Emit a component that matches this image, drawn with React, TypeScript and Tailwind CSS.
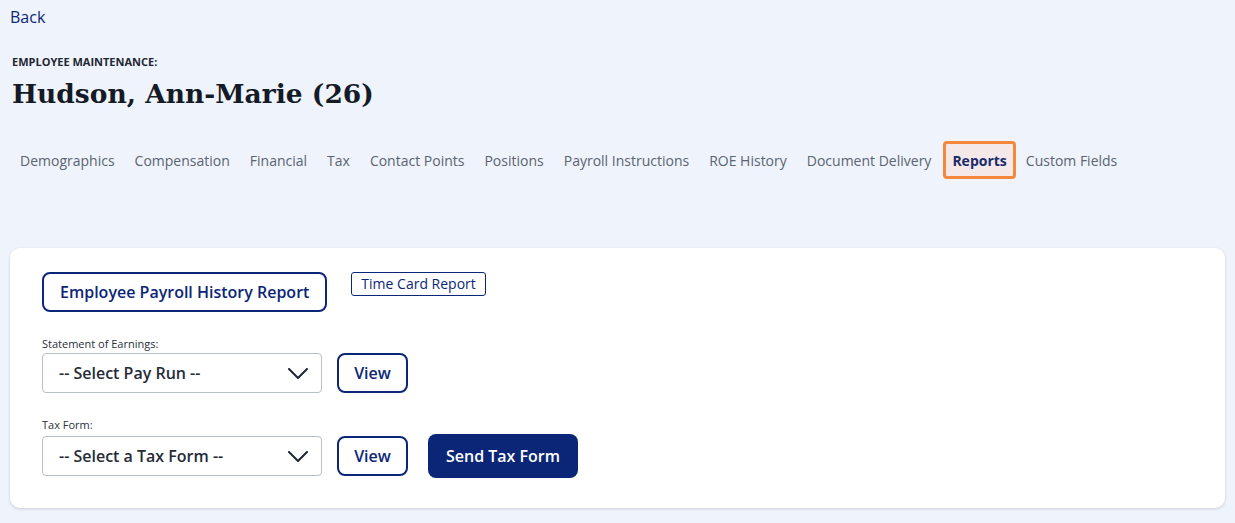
const tabs = [
  "Demographics",
  "Compensation",
  "Financial",
  "Tax",
  "Contact Points",
  "Positions",
  "Payroll Instructions",
  "ROE History",
  "Document Delivery",
  "Reports",
  "Custom Fields",
];

const SelectBox = ({ label }: { label: string }) => (
  <div className="flex h-[40px] w-[280px] items-center justify-between rounded-[4px] border border-[#b9bfc8] bg-white pl-[16px] pr-[13px]">
    <span className="text-[16px] font-semibold text-[#252c38]">{label}</span>
    <svg width="20" height="11" viewBox="0 0 20 11" fill="none">
      <polyline points="1,1 10,10 19,1" stroke="#1e2633" strokeWidth="2" strokeLinecap="round" strokeLinejoin="round" />
    </svg>
  </div>
);

export default function App() {
  return (
    <div
      className="min-h-[523px] bg-[#eff3fb] px-[10px] pt-[5px]"
      style={{ fontFamily: '"Open Sans", "Noto Sans", sans-serif' }}
    >
      {/* Back link */}
      <a className="text-[16px] text-[#0b2677]">Back</a>

      {/* Header */}
      <div className="mt-[26px] pl-[2px]">
        <div className="text-[11px] font-bold uppercase leading-[14px] text-[#1f2733]">
          Employee Maintenance:
        </div>
        <h1
          className="mt-[7px] text-[26.5px] font-bold leading-[36px] text-[#141b26]"
          style={{ fontFamily: '"DejaVu Serif", "Liberation Serif", serif' }}
        >
          Hudson, Ann-Marie (26)
        </h1>
      </div>

      {/* Tabs */}
      <div className="mt-[29px] flex">
        {tabs.map((t) => (
          <div
            key={t}
            className={
              t === "Reports"
                ? "ml-[2px] flex h-[38px] items-center rounded-[4px] border-[3px] border-[#f5883a] bg-[#f4e9e8] px-[6px] text-[14px] font-bold text-[#1b2a6b]"
                : "flex h-[38px] items-center rounded-[4px] border-[3px] border-transparent px-[7px] text-[14px] text-[#5a6472]"
            }
          >
            {t}
          </div>
        ))}
      </div>

      {/* Reports card */}
      <div className="mt-[69px] rounded-[10px] bg-white px-[32px] pb-[30px] pt-[24px] shadow-[0_1px_3px_rgba(30,40,90,0.18)]">
        <div className="flex items-start gap-[24px]">
          <button className="h-[40px] rounded-[8px] border-2 border-[#0b2677] px-[16px] text-[16px] font-semibold text-[#0b2677]">
            Employee Payroll History Report
          </button>
          <button className="h-[24px] rounded-[3px] border border-[#0b2677] px-[9px] text-[14px] font-medium leading-none text-[#0b2677]">
            Time Card Report
          </button>
        </div>

        <div className="mt-[25px] text-[11px] leading-[14px] text-[#2a313c]">Statement of Earnings:</div>
        <div className="mt-[2px] flex items-center gap-[15px]">
          <SelectBox label="-- Select Pay Run --" />
          <button className="h-[40px] w-[71px] rounded-[8px] border-2 border-[#0b2677] text-[16px] font-semibold text-[#0b2677]">
            View
          </button>
        </div>

        <div className="mt-[25px] text-[11px] leading-[14px] text-[#2a313c]">Tax Form:</div>
        <div className="mt-[2px] flex items-center gap-[15px]">
          <SelectBox label="-- Select a Tax Form --" />
          <button className="h-[40px] w-[71px] rounded-[8px] border-2 border-[#0b2677] text-[16px] font-semibold text-[#0b2677]">
            View
          </button>
          <button className="ml-[5px] h-[44px] w-[150px] rounded-[8px] bg-[#0b2677] text-[16px] font-semibold text-white">
            Send Tax Form
          </button>
        </div>
      </div>
    </div>
  );
}
